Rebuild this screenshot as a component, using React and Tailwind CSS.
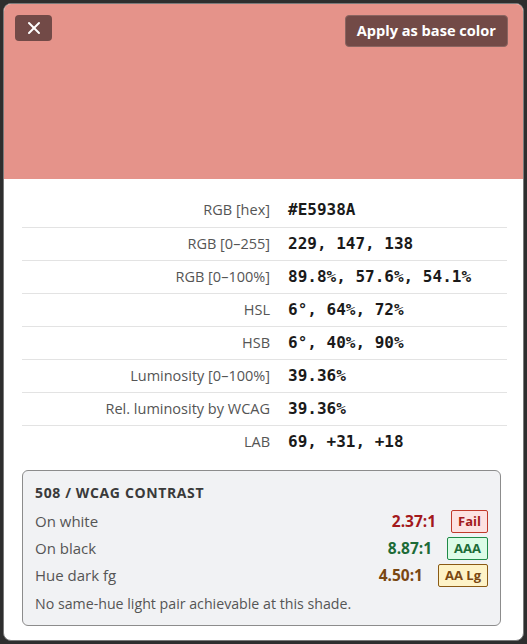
import { X } from "lucide-react";

const rows = [
  ["RGB [hex]", "#E5938A"],
  ["RGB [0–255]", "229, 147, 138"],
  ["RGB [0–100%]", "89.8%, 57.6%, 54.1%"],
  ["HSL", "6°, 64%, 72%"],
  ["HSB", "6°, 40%, 90%"],
  ["Luminosity [0–100%]", "39.36%"],
  ["Rel. luminosity by WCAG", "39.36%"],
  ["LAB", "69, +31, +18"],
];

const checks = [
  { label: "On white", ratio: "2.37:1", badge: "Fail", ratioCls: "text-[#a3191c]", badgeCls: "bg-[#fde2e2] border-[#c0392b] text-[#a3191c]" },
  { label: "On black", ratio: "8.87:1", badge: "AAA", ratioCls: "text-[#1c6b37]", badgeCls: "bg-[#dcfce7] border-[#1f8a47] text-[#1c6b37]" },
  { label: "Hue dark fg", ratio: "4.50:1", badge: "AA Lg", ratioCls: "text-[#7a4712]", badgeCls: "bg-[#fef3c7] border-[#8a5a14] text-[#7a4712]" },
];

export default function App() {
  return (
    <div className="h-[644px] w-[527px] bg-[#2e2e2e] p-[3px] font-['Open_Sans',sans-serif]">
      <div className="h-[638px] overflow-hidden rounded-lg border border-[#7a7a7a] bg-white">
        {/* swatch */}
        <div className="flex h-[175px] items-start justify-between bg-[#E5938A] pl-[11px] pr-[15px] pt-[11px]">
          <button className="flex h-[26px] w-[37px] items-center justify-center rounded bg-[#724a47] text-white">
            <X size={20} strokeWidth={2.4} />
          </button>
          <button className="h-[32px] rounded border border-[#8a6561] bg-[#724a47] px-[11px] text-[14.6px] font-bold text-white">
            Apply as base color
          </button>
        </div>

        <div className="px-[18px] pt-[15px]">
          <table className="w-[485px] border-collapse">
            <tbody>
              {rows.map(([label, value], i) => (
                <tr
                  key={label}
                  className={i < rows.length - 1 ? "h-[33px] border-b border-[#e3e3e3]" : "h-[33px]"}
                >
                  <td className="w-[257px] pr-[9px] text-right text-[14.5px] text-[#555]">{label}</td>
                  <td className="pl-[9px] font-['DejaVu_Sans_Mono',monospace] text-[16px] font-bold text-[#1a1a1a]">
                    {value}
                  </td>
                </tr>
              ))}
            </tbody>
          </table>

          <div className="mt-[12px] w-[479px] rounded-md border border-[#8c8c8c] bg-[#f1f2f4] px-[12px] pb-[11px] pt-[11px]">
            <div className="text-[14px] font-bold uppercase tracking-[0.045em] text-[#3a3a3a]">
              508 / WCAG Contrast
            </div>
            <div className="mt-[7px] flex flex-col gap-[4px]">
              {checks.map((c) => (
                <div key={c.label} className="flex h-[23px] items-center justify-between">
                  <span className="text-[15px] text-[#555]">{c.label}</span>
                  <div className="flex items-center gap-[15px]">
                    <span className={`text-[15.5px] font-bold ${c.ratioCls}`}>{c.ratio}</span>
                    <span className={`rounded-[2px] border px-[6px] py-[1px] text-[13px] font-bold leading-[19px] ${c.badgeCls}`}>
                      {c.badge}
                    </span>
                  </div>
                </div>
              ))}
            </div>
            <div className="mt-[6px] text-[14.2px] text-[#555]">
              No same-hue light pair achievable at this shade.
            </div>
          </div>
        </div>
      </div>
    </div>
  );
}
